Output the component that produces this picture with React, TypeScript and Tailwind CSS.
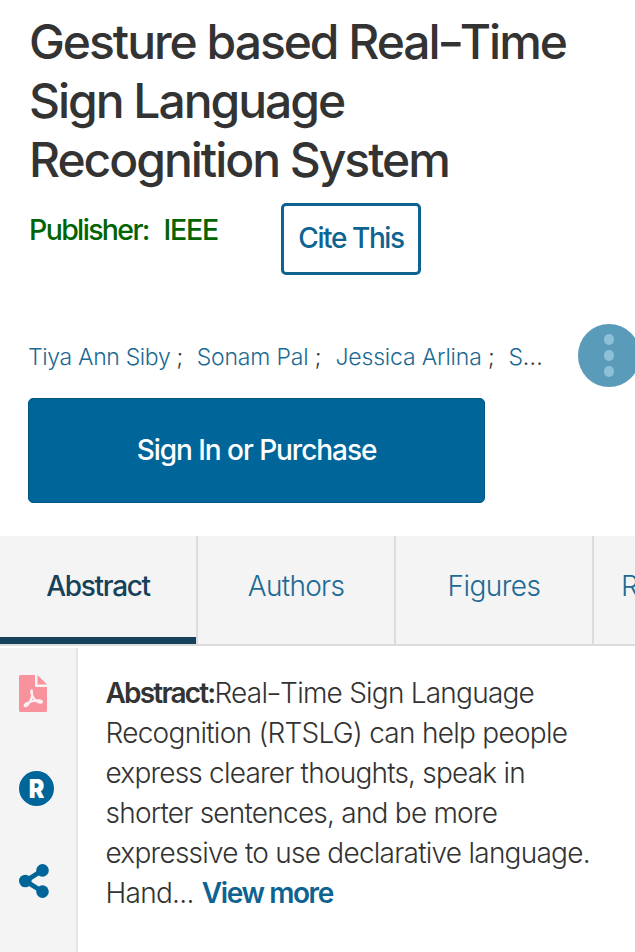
const authors = ["Tiya Ann Siby", "Sonam Pal", "Jessica Arlina"];

function PdfIcon() {
  return (
    <svg viewBox="0 0 28 37" className="h-[37px] w-[28px] shrink-0">
      <path d="M1.5 0H16v10.5a1.5 1.5 0 0 0 1.5 1.5H28v23.500a1.500 1.500 0 0 1-1.500 1.500h-25A1.500 1.500 0 0 1 0 35.500v-34A1.500 1.500 0 0 1 1.500 0Z" fill="#f8939d" />
      <path d="M18.500 0 28 9.500H18.500Z" fill="#f8939d" />
      <path d="M12.700 15.500C13.900 20 13 23.500 10.500 27.500 9 30 7.200 31.800 5.800 31 4.700 29.500 8.800 27.300 13 26.200 17 25.200 23 24.800 23 26.800 22.500 28.800 17.300 27 14.800 23.300 12.700 20 11.500 16 12.700 15.500Z" fill="none" stroke="#fbf1f2" strokeWidth="2.200" strokeLinejoin="round" />
    </svg>
  );
}

function ShareIcon() {
  return (
    <svg viewBox="0 0 30 34" className="mt-[58px] h-[34px] w-[30px] shrink-0">
      <path d="M23.300 6.500 6.500 17l16.800 10.500" fill="none" stroke="#006699" strokeWidth="4.800" />
      <circle cx="23.500" cy="6.400" r="6.300" fill="#006699" />
      <circle cx="6.300" cy="17" r="6.300" fill="#006699" />
      <circle cx="23.500" cy="27.600" r="6.300" fill="#006699" />
    </svg>
  );
}

export default function App() {
  return (
    <main className="flex h-[952px] w-[635px] flex-col overflow-hidden bg-white font-['Inter',sans-serif] text-[#333]">
      <h1 className="h-[203px] shrink-0 whitespace-nowrap pl-[29px] pt-[12px] text-[48px] leading-[59px] font-medium tracking-[-2.03px]">
        <span className="block">Gesture based Real<span className="inline-block origin-center scale-x-125 px-[0.500px]">-</span>Time</span>
        <span className="block">Sign Language</span>
        <span className="block">Recognition System</span>
      </h1>
      <div className="flex h-[121px] shrink-0 items-start pl-[29px]">
        <span className="w-[252px] whitespace-nowrap pt-[11px] text-[28.5px] font-medium leading-8 tracking-[-1.25px] text-[#006400]"><span className="tracking-[-1.65px]">Publisher:</span>&nbsp;<span className="ml-[2px]"> IEEE</span></span>
        <button className="h-[72px] w-[140px] whitespace-nowrap rounded-[5px] border-[3px] border-[#0f6390] pb-[2px] text-[28px] font-medium tracking-[-1.4px] text-[#0f6390]">Cite This</button>
      </div>
      <div className="flex h-[74px] shrink-0 items-start">
        <p className="w-[577.500px] shrink-0 whitespace-pre pl-[28px] pt-[17px] text-[23px] font-light leading-8 tracking-[-0.34px] text-[#1c6a93]">
          {authors.map((a, i) => (
            <span key={a} className={i === 0 ? "" : "tracking-[-0.17px]"}>{a}<span className="mr-[1.500px] text-[#333]"> ;  </span></span>
          ))}
          S<span className="tracking-[0.200px] text-[#333]">...</span>
        </p>
        <button className="flex h-[63px] w-[62px] shrink-0 flex-col items-center justify-center gap-[5px] rounded-full bg-[#5b9bba]">
          <span className="h-[11px] w-[10px] rounded-full bg-[#8dbfd8]" />
          <span className="h-[11px] w-[10px] rounded-full bg-[#8dbfd8]" />
          <span className="h-[11px] w-[10px] rounded-full bg-[#8dbfd8]" />
        </button>
      </div>
      <button className="ml-[28px] h-[105px] w-[457px] shrink-0 rounded-[5px] border border-[#005786] bg-[#006699] pb-[1px] text-[28px] font-medium tracking-[-1.04px] text-white">Sign In or Purchase</button>
      <nav className="mt-[33px] flex h-[110px] w-[635px] shrink-0 overflow-hidden border-b-2 border-[#dcdcdc] bg-[#f4f4f4] text-[28px] leading-[100px] text-[#1c6a93]">
        <div className="h-[108px] w-[196px] shrink-0 border-b-[7px] border-[#15425a] text-center font-medium tracking-[-1.3px] text-[#15425a]">Abstract</div>
        <div className="w-[198px] shrink-0 border-l-2 border-[#dcdcdc] text-center font-light tracking-[-0.7px]">Authors</div>
        <div className="w-[198px] shrink-0 border-l-2 border-[#dcdcdc] text-center font-light tracking-[-0.55px]">Figures</div>
        <div className="w-[198px] shrink-0 border-l-2 border-[#dcdcdc] pl-[27px] font-light">References</div>
      </nav>
      <section className="flex flex-1">
        <aside className="mt-[2px] flex w-[78px] flex-col border-r-2 border-[#e6e6e6] bg-[#f4f4f4] pl-[19px] pt-[27px]">
          <PdfIcon />
          <div className="mt-[59px] flex h-[35px] w-[35px] items-center justify-center rounded-full bg-[#006699] text-[26px] font-black leading-none text-white"><span className="inline-block scale-x-90">R</span></div>
          <ShareIcon />
        </aside>
        <div className="whitespace-nowrap pl-[27.500px] pt-[27px] text-[28px] font-light leading-10 tracking-[-0.72px]">
          <p><strong className="font-semibold tracking-[-1.8px]">Abstract:</strong><span className="tracking-[-0.770px]">Real<span className="inline-block scale-x-125 px-[0.500px]">-</span>Time Sign Language</span></p>
          <p>Recognition (RTSLG) can help people</p>
          <p className="tracking-[-0.79px]">express clearer thoughts, speak in</p>
          <p className="tracking-[-0.77px]">shorter sentences, and be more</p>
          <p className="tracking-[-0.75px]">expressive to use declarative language.</p>
          <p>Hand... <strong className="ml-px font-semibold tracking-[-1.4px] text-[#0f6390]">View more</strong></p>
        </div>
      </section>
    </main>
  );
}
